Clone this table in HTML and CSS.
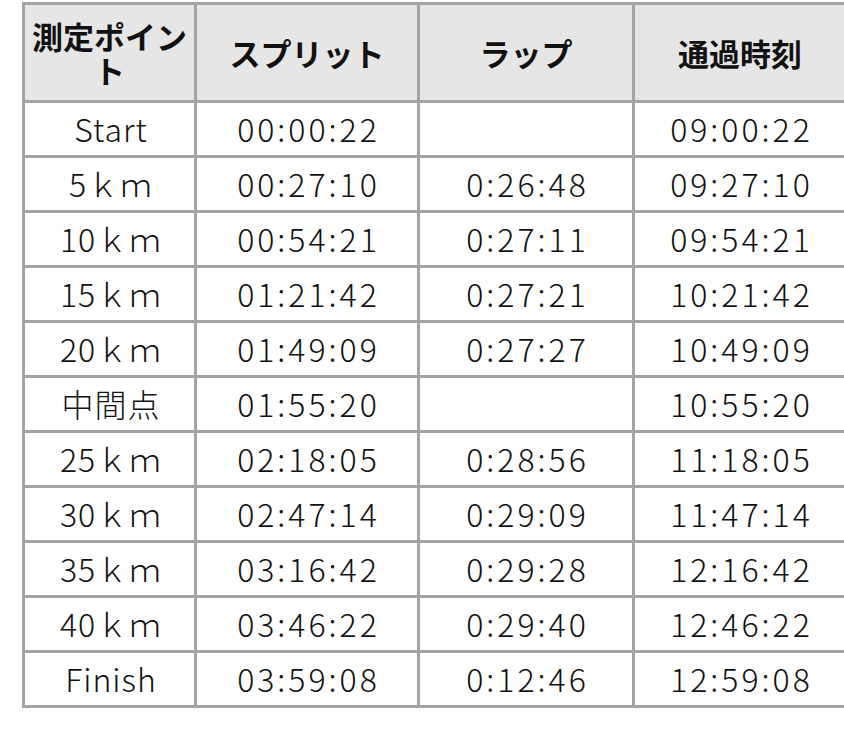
FILE: index.html
```html
<!DOCTYPE html>
<html lang="ja">
<head>
<meta charset="utf-8">
<link rel="stylesheet" href="styles.css">
</head>
<body>
<div class="wrap">
<table class="splits">
<colgroup><col class="c1"><col class="c2"><col class="c3"><col class="c4"></colgroup>
<thead>
<tr><th>測定ポイント</th><th>スプリット</th><th>ラップ</th><th>通過時刻</th></tr>
</thead>
<tbody>
<tr><td class="pt">Start</td><td>00:00:22</td><td></td><td>09:00:22</td></tr>
<tr><td class="pt">5ｋｍ</td><td>00:27:10</td><td>0:26:48</td><td>09:27:10</td></tr>
<tr><td class="pt">10ｋｍ</td><td>00:54:21</td><td>0:27:11</td><td>09:54:21</td></tr>
<tr><td class="pt">15ｋｍ</td><td>01:21:42</td><td>0:27:21</td><td>10:21:42</td></tr>
<tr><td class="pt">20ｋｍ</td><td>01:49:09</td><td>0:27:27</td><td>10:49:09</td></tr>
<tr><td class="pt">中間点</td><td>01:55:20</td><td></td><td>10:55:20</td></tr>
<tr><td class="pt">25ｋｍ</td><td>02:18:05</td><td>0:28:56</td><td>11:18:05</td></tr>
<tr><td class="pt">30ｋｍ</td><td>02:47:14</td><td>0:29:09</td><td>11:47:14</td></tr>
<tr><td class="pt">35ｋｍ</td><td>03:16:42</td><td>0:29:28</td><td>12:16:42</td></tr>
<tr><td class="pt">40ｋｍ</td><td>03:46:22</td><td>0:29:40</td><td>12:46:22</td></tr>
<tr><td class="pt">Finish</td><td>03:59:08</td><td>0:12:46</td><td>12:59:08</td></tr>
</tbody>
</table>
</div>
</body>
</html>
```
FILE: styles.css
```css
html, body {
  margin: 0;
  padding: 0;
  background: #ffffff;
  overflow: hidden;
  width: 844px;
  height: 734px;
}

.wrap {
  padding: 2px 0 0 22px;
}

.splits {
  table-layout: fixed;
  border-collapse: separate;
  border-spacing: 0;
  width: 826px;
  border-top: 3px solid #a4a4a4;
  border-left: 3px solid #a4a4a4;
  font-family: "Noto Sans CJK JP", "Noto Sans", sans-serif;
  color: #111111;
}

.c1 { width: 172px; }
.c2 { width: 223px; }
.c3 { width: 215px; }
.c4 { width: 213px; }

.splits th,
.splits td {
  border-right: 3px solid #a4a4a4;
  border-bottom: 3px solid #a4a4a4;
  padding: 0 4px;
  text-align: center;
  vertical-align: middle;
  box-sizing: border-box;
  white-space: normal;
}

.splits th {
  background: #e6e6e6;
  font-weight: 700;
  font-size: 31px;
  line-height: 34px;
  height: 98px;
}

.splits td {
  font-weight: 300;
  font-size: 32px;
  line-height: 36px;
  height: 55px;
  padding: 0 1px 3px 4px;
  letter-spacing: 3px;
  white-space: nowrap;
}

.splits td.pt {
  letter-spacing: 1px;
}
```
